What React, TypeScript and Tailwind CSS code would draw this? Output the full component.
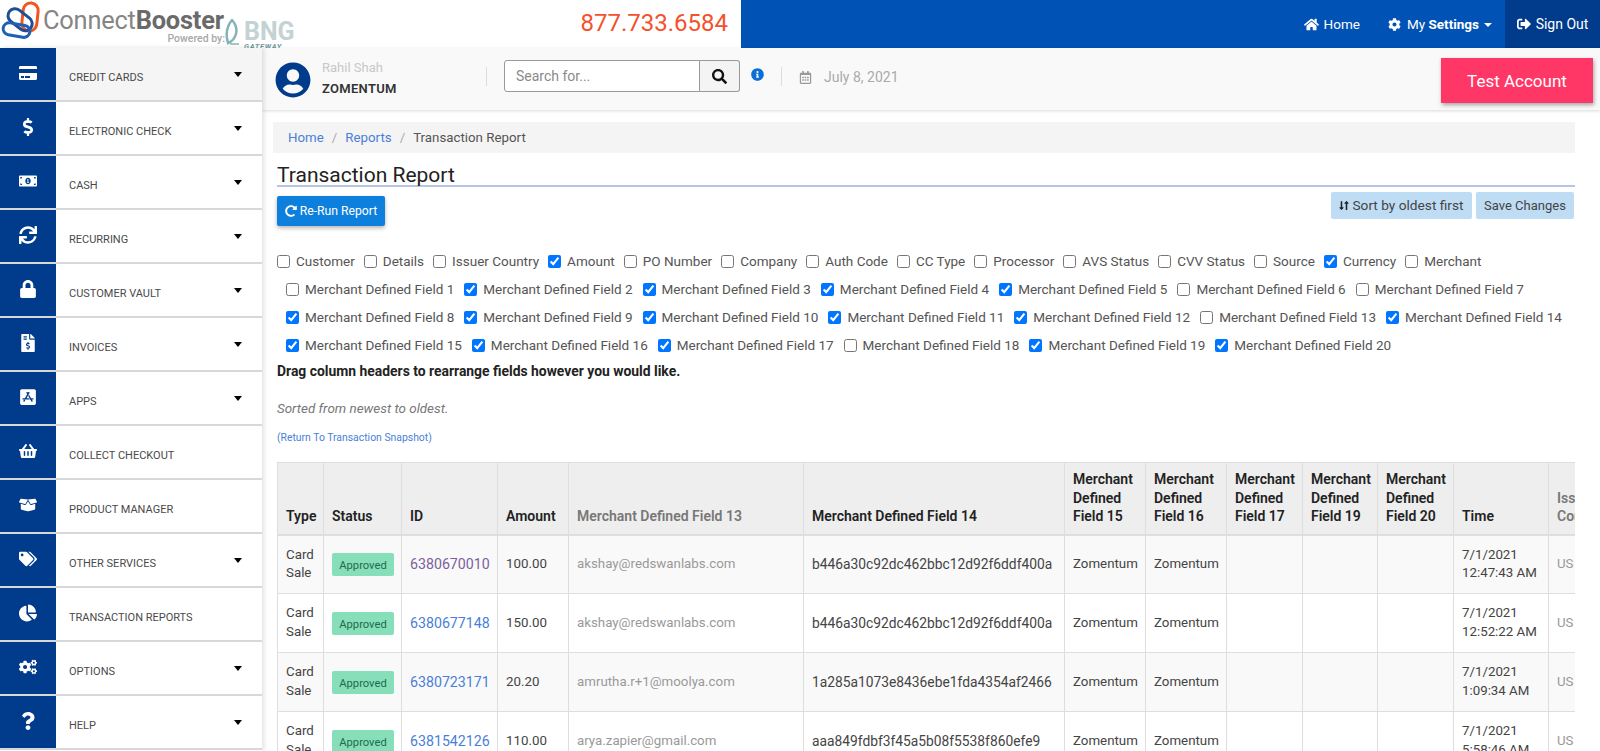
import {
  FaAppStoreIos,
  FaBoxOpen,
  FaChartPie,
  FaCog,
  FaCogs,
  FaCreditCard,
  FaDollarSign,
  FaFileInvoiceDollar,
  FaHome,
  FaInfoCircle,
  FaLock,
  FaLongArrowAltDown,
  FaLongArrowAltUp,
  FaMoneyBillAlt,
  FaQuestion,
  FaRedoAlt,
  FaRegCalendarAlt,
  FaSearch,
  FaShoppingBasket,
  FaSignOutAlt,
  FaSync,
  FaTags,
  FaUserCircle,
} from "react-icons/fa"

const menu = [
  { label: "CREDIT CARDS", icon: FaCreditCard, caret: true },
  { label: "ELECTRONIC CHECK", icon: FaDollarSign, caret: true },
  { label: "CASH", icon: FaMoneyBillAlt, caret: true },
  { label: "RECURRING", icon: FaSync, caret: true },
  { label: "CUSTOMER VAULT", icon: FaLock, caret: true },
  { label: "INVOICES", icon: FaFileInvoiceDollar, caret: true },
  { label: "APPS", icon: FaAppStoreIos, caret: true },
  { label: "COLLECT CHECKOUT", icon: FaShoppingBasket, caret: false },
  { label: "PRODUCT MANAGER", icon: FaBoxOpen, caret: false },
  { label: "OTHER SERVICES", icon: FaTags, caret: true },
  { label: "TRANSACTION REPORTS", icon: FaChartPie, caret: false },
  { label: "OPTIONS", icon: FaCogs, caret: true },
  { label: "HELP", icon: FaQuestion, caret: true },
]

const mdf = (n: number, checked: boolean) => ({ label: `Merchant Defined Field ${n}`, checked })

const fieldRows = [
  [
    { label: "Customer", checked: false },
    { label: "Details", checked: false },
    { label: "Issuer Country", checked: false },
    { label: "Amount", checked: true },
    { label: "PO Number", checked: false },
    { label: "Company", checked: false },
    { label: "Auth Code", checked: false },
    { label: "CC Type", checked: false },
    { label: "Processor", checked: false },
    { label: "AVS Status", checked: false },
    { label: "CVV Status", checked: false },
    { label: "Source", checked: false },
    { label: "Currency", checked: true },
    { label: "Merchant", checked: false },
  ],
  [mdf(1, false), mdf(2, true), mdf(3, true), mdf(4, true), mdf(5, true), mdf(6, false), mdf(7, false)],
  [mdf(8, true), mdf(9, true), mdf(10, true), mdf(11, true), mdf(12, true), mdf(13, false), mdf(14, true)],
  [mdf(15, true), mdf(16, true), mdf(17, true), mdf(18, false), mdf(19, true), mdf(20, true)],
]

const transactions = [
  { id: "6380670010", visited: true, amount: "100.00", email: "akshay@redswanlabs.com", hash: "b446a30c92dc462bbc12d92f6ddf400a", date: "7/1/2021", time: "12:47:43 AM" },
  { id: "6380677148", visited: false, amount: "150.00", email: "akshay@redswanlabs.com", hash: "b446a30c92dc462bbc12d92f6ddf400a", date: "7/1/2021", time: "12:52:22 AM" },
  { id: "6380723171", visited: false, amount: "20.20", email: "amrutha.r+1@moolya.com", hash: "1a285a1073e8436ebe1fda4354af2466", date: "7/1/2021", time: "1:09:34 AM" },
  { id: "6381542126", visited: false, amount: "110.00", email: "arya.zapier@gmail.com", hash: "aaa849fdbf3f45a5b08f5538f860efe9", date: "7/1/2021", time: "5:58:46 AM" },
]

function Logo() {
  return (
    <div className="flex h-12 items-start">
      <svg width="41" height="40" viewBox="0 0 41 40" fill="none" className="shrink-0">
        <rect x="22.5" y="3" width="15" height="28" rx="7.5" transform="rotate(6 30 17)" stroke="#f0561f" strokeWidth="3" />
        <rect x="7" y="12.5" width="27" height="14" rx="7" transform="rotate(38 20 19)" stroke="#1f4e96" strokeWidth="3" />
        <rect x="3" y="24" width="27" height="12" rx="6" transform="rotate(10 16 30)" stroke="#1f5fb4" strokeWidth="3" />
      </svg>
      <div className="ml-[2px] w-[182px] shrink-0">
        <div className="mt-[7px] text-[25.4px] leading-[26px] tracking-[-0.2px] whitespace-nowrap text-[#858585]">
          Connect<span className="font-bold text-[#6a6a6a]">Booster</span>
        </div>
        <div className="mt-[1px] text-right text-[10.5px] leading-[10px] font-medium text-[#a8a8a8]">Powered by:</div>
      </div>
      <svg className="mt-[19px] shrink-0" width="16" height="27" viewBox="0 0 16 27" fill="none">
        <path d="M7 1 C2 7 0 14 3 24 C11 21 15 10 7 1 Z" stroke="#86b4b6" strokeWidth="2.5" />
        <path d="M5 25 L14 25" stroke="#86b4b6" strokeWidth="1.5" />
      </svg>
      <div className="mt-[21px] w-[56px] shrink-0 pl-[3px]">
        <div className="text-[25px] leading-[21px] font-bold text-[#c3d2d2]">BNG</div>
        <div className="text-[7.5px] leading-[9px] font-bold tracking-[0.7px] text-[#6f9a9c] italic">GATEWAY</div>
      </div>
    </div>
  )
}

function TopBar() {
  return (
    <header className="flex h-12 shrink-0 text-[14px] text-white">
      <div className="flex w-[741px] justify-between bg-white pr-[13px]">
        <Logo />
        <div className="text-[24px] leading-[47px] text-[#f4512c]">877.733.6584</div>
      </div>
      <div className="flex flex-1 items-center justify-end bg-[#0052b4]">
        <a className="mr-[28px] flex items-center gap-[5px] text-[13.5px]">
          <FaHome className="text-[15px]" />
          Home
        </a>
        <a className="mr-[13px] flex items-center text-[13.5px]">
          <FaCog className="mr-[6px] text-[13px]" />
          My&nbsp;<b>Settings</b>
          <span className="mt-[2px] ml-[5px] border-x-[4px] border-t-[4px] border-x-transparent border-t-white" />
        </a>
      </div>
      <a className="flex w-[95px] items-center justify-center gap-[5px] bg-[#003b8c]">
        <FaSignOutAlt className="text-[14px]" />
        Sign Out
      </a>
    </header>
  )
}

function Sidebar() {
  return (
    <aside className="z-10 w-[262px] shrink-0 bg-white shadow-[2px_0_5px_rgba(0,0,0,0.12)]">
      {menu.map((item, i) => (
        <div key={item.label} className={`flex h-[54px] border-b-2 border-[#d8d8d8] ${i === 0 ? "bg-[#f5f5f5]" : "bg-white"}`}>
          <div className="flex w-[56px] items-center justify-center bg-[#003b8c] pb-[3px] text-[18px] text-white">
            <item.icon />
          </div>
          <div className="flex-1 pt-[22px] pl-[13px] text-[11px] leading-[15px] text-[#4a4a4a]">{item.label}</div>
          {item.caret && (
            <span className="mt-[24px] mr-[20px] h-0 border-x-[4.5px] border-t-[5px] border-x-transparent border-t-black" />
          )}
        </div>
      ))}
    </aside>
  )
}

function UserBar() {
  return (
    <div className="flex h-[62px] shrink-0 bg-[#f9f9f9] shadow-[0_1px_3px_rgba(0,0,0,0.15)]">
      <FaUserCircle className="mt-[14px] ml-[13px] text-[36px] text-[#003b8c]" />
      <div className="ml-[11px] w-[164px] pt-[10px]">
        <div className="text-[13px] leading-[20px] text-[#c8c8c8]">Rahil Shah</div>
        <div className="mt-[1px] text-[13px] leading-[20px] font-semibold tracking-[0.3px] text-[#333333]">ZOMENTUM</div>
      </div>
      <div className="mt-[19px] h-[19px] w-px bg-[#dddddd]" />
      <div className="mt-[12px] ml-[17px] flex h-[32px]">
        <input
          placeholder="Search for..."
          className="h-full w-[196px] rounded-l-[3px] border border-[#999999] bg-white pl-[11px] text-[14px] placeholder:text-[#8a8a8a]"
        />
        <button className="flex w-[40px] items-center justify-center rounded-r-[3px] border border-l-0 border-[#999999] bg-[#f4f4f4] text-[15px] text-[#111111]">
          <FaSearch />
        </button>
      </div>
      <FaInfoCircle className="mt-[20px] ml-[11px] text-[13px] text-[#0b6fd6]" />
      <div className="mt-[19px] ml-[17px] h-[19px] w-px bg-[#dddddd]" />
      <FaRegCalendarAlt className="mt-[23px] ml-[17px] text-[13px] text-[#999999]" />
      <div className="mt-[19px] ml-[12px] text-[14px] leading-[20px] text-[#aaaaaa]">July 8, 2021</div>
      <div className="mt-[10px] mr-[7px] ml-auto flex h-[45px] w-[152px] items-center justify-center bg-[#ff3767] pt-[2px] text-[17px] text-white shadow-[1px_2px_4px_rgba(0,0,0,0.35)]">
        Test Account
      </div>
    </div>
  )
}

function FieldPicker() {
  return (
    <div className="mt-[21px] text-[13.5px] text-[#555555]">
      {fieldRows.map((row, r) => (
        <div key={r} className={`flex h-[28px] items-center ${r === 0 ? "gap-[9px]" : "gap-[10px] pl-[9px]"}`}>
          {row.map((f) => (
            <label key={f.label} className="flex items-center gap-[6px] whitespace-nowrap">
              <input type="checkbox" checked={f.checked} readOnly className="m-0 h-[13px] w-[13px]" />
              {f.label}
            </label>
          ))}
        </div>
      ))}
    </div>
  )
}

const th = "border border-b-2 border-[#dedede] px-2 pb-[8px] align-bottom text-left text-[14px] leading-[18.5px] font-semibold text-[#222222]"
const td = "border border-[#dedede] px-2 align-middle text-[13.3px] leading-[18.7px] text-[#444444]"

function ReportTable() {
  return (
    <div className="mt-[18px] ml-[4px] overflow-hidden">
      <table className="w-[1365px] table-fixed border-collapse">
        <colgroup>
          <col className="w-[46px]" />
          <col className="w-[78px]" />
          <col className="w-[96px]" />
          <col className="w-[71px]" />
          <col className="w-[235px]" />
          <col className="w-[261px]" />
          <col className="w-[81px]" />
          <col className="w-[81px]" />
          <col className="w-[76px]" />
          <col className="w-[75px]" />
          <col className="w-[76px]" />
          <col className="w-[95px]" />
          <col className="w-[94px]" />
        </colgroup>
        <thead>
          <tr className="h-[72px] bg-[#eeeeee]">
            <th className={th}>Type</th>
            <th className={th}>Status</th>
            <th className={th}>ID</th>
            <th className={th}>Amount</th>
            <th className={`${th} !text-[#777777]`}>Merchant Defined Field 13</th>
            <th className={th}>Merchant Defined Field 14</th>
            <th className={th}>Merchant Defined Field 15</th>
            <th className={th}>Merchant Defined Field 16</th>
            <th className={th}>Merchant Defined Field 17</th>
            <th className={th}>Merchant Defined Field 19</th>
            <th className={th}>Merchant Defined Field 20</th>
            <th className={th}>Time</th>
            <th className={`${th} !text-[#777777]`}>Issuer Country</th>
          </tr>
        </thead>
        <tbody>
          {transactions.map((t, i) => (
            <tr key={t.id} className={`h-[59px] ${i % 2 === 0 ? "bg-[#f9f9f9]" : "bg-white"}`}>
              <td className={td}>Card Sale</td>
              <td className={td}>
                <span className="flex h-[23px] w-[62px] items-end justify-center rounded-[2px] bg-[#86dfb8] pb-[2px] text-[11.2px] leading-[16px] text-[#1e6a4a]">
                  Approved
                </span>
              </td>
              <td className={`${td} !text-[14.2px]`}>
                <a className={t.visited ? "text-[#7b5f9e]" : "text-[#4a7fd8]"}>{t.id}</a>
              </td>
              <td className={td}>{t.amount}</td>
              <td className={`${td} !text-[#999999]`}>{t.email}</td>
              <td className={`${td} !text-[13.8px]`}>{t.hash}</td>
              <td className={td}>Zomentum</td>
              <td className={td}>Zomentum</td>
              <td className={td} />
              <td className={td} />
              <td className={td} />
              <td className={td}>
                {t.date}
                <br />
                {t.time}
              </td>
              <td className={`${td} !text-[#999999]`}>US</td>
            </tr>
          ))}
        </tbody>
      </table>
    </div>
  )
}

export default function App() {
  return (
    <div className="flex h-screen flex-col overflow-hidden bg-white font-['Roboto',sans-serif]">
      <TopBar />
      <div className="flex min-h-0 flex-1">
        <Sidebar />
        <main className="min-w-0 flex-1">
          <UserBar />
          <div className="pr-[25px] pl-[11px]">
            {/* Breadcrumb */}
            <div className="mt-[12px] flex h-[31px] items-center gap-[8px] bg-[#f4f4f4] pt-[1px] pl-[15px] text-[13.3px]">
              <a className="text-[#4a7fd8]">Home</a>
              <span className="text-[#aaaaaa]">/</span>
              <a className="text-[#4a7fd8]">Reports</a>
              <span className="text-[#aaaaaa]">/</span>
              <span className="text-[#555555]">Transaction Report</span>
            </div>

            <h1 className="ml-[4px] h-[34px] border-b-2 border-[#b8c4e4] pt-[10px] text-[21px] leading-[24px] text-[#222222]">
              Transaction Report
            </h1>

            <div className="ml-[4px] flex items-start justify-between pt-[5px] pr-px">
              <button className="mt-[4px] flex h-[30px] w-[108px] items-center justify-center gap-[3px] rounded-[2px] bg-[#0d7fdd] text-[12.2px] text-white shadow-[0_2px_4px_rgba(0,0,0,0.3)]">
                <FaRedoAlt className="text-[12px]" />
                Re-Run Report
              </button>
              <div className="flex gap-[4px]">
                <button className="flex h-[27px] w-[141px] items-center justify-center gap-[3px] rounded-[2px] bg-[#bfdcf5] text-[13.7px] text-[#444444]">
                  <span className="flex text-[13px] text-[#222222]">
                    <FaLongArrowAltDown className="w-[5px]" />
                    <FaLongArrowAltUp className="w-[5px]" />
                  </span>
                  Sort by oldest first
                </button>
                <button className="h-[27px] w-[98px] rounded-[2px] bg-[#bfdcf5] text-[13px] text-[#444444]">Save Changes</button>
              </div>
            </div>

            <div className="ml-[4px]">
              <FieldPicker />
              <p className="mt-[2px] text-[13.9px] leading-[20px] font-bold text-[#222222]">
                Drag column headers to rearrange fields however you would like.
              </p>
              <p className="mt-[18px] text-[13.4px] leading-[20px] text-[#777777] italic">Sorted from newest to oldest.</p>
              <a className="mt-[13px] block text-[10.4px] leading-[12px] text-[#4a7fd8]">(Return To Transaction Snapshot)</a>
            </div>

            <ReportTable />
          </div>
        </main>
      </div>
    </div>
  )
}
